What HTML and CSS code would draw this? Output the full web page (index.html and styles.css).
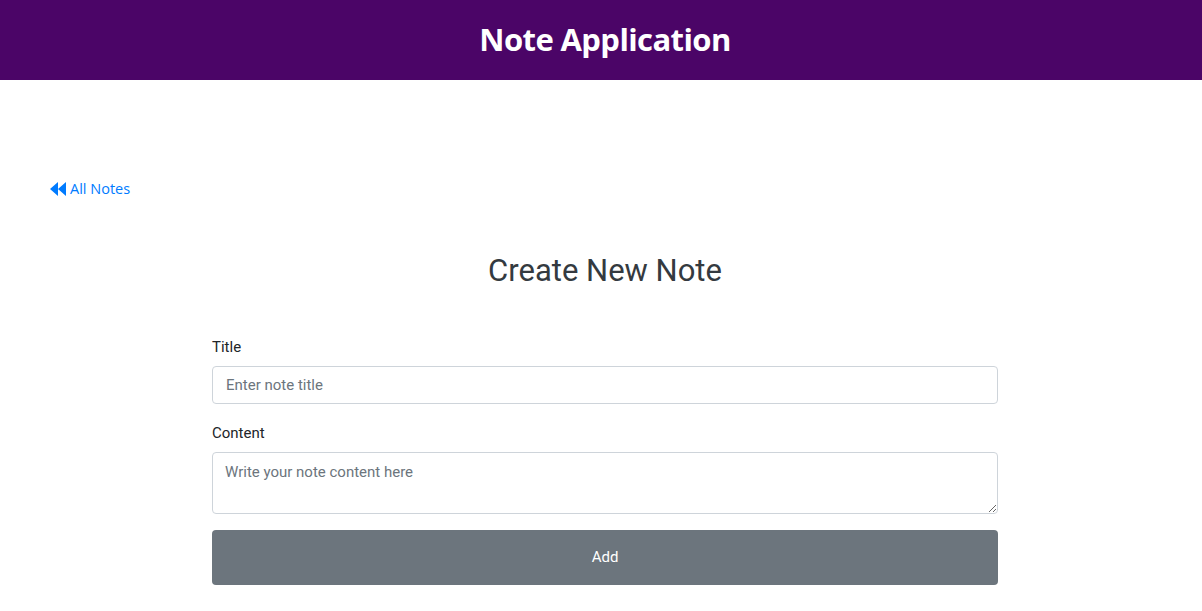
FILE: index.html
```html
<!DOCTYPE html>
<html>
<head>
<meta charset="utf-8">
<link rel="stylesheet" href="styles.css">
</head>
<body>
<header class="topbar"><h1 class="brand">Note Application</h1></header>
<main class="page">
  <a class="back" href="#"><svg class="back-icon" viewBox="0 0 16 14" width="16" height="14"><path d="M8 0 L0 7 L8 14 Z M16 0 L8 7 L16 14 Z" fill="#007bff"/></svg>All Notes</a>
  <h2 class="heading">Create New Note</h2>
  <form class="note-form">
    <label class="label" for="t">Title</label>
    <input class="field" id="t" type="text" placeholder="Enter note title">
    <label class="label" for="c">Content</label>
    <textarea class="field area" id="c" placeholder="Write your note content here"></textarea>
    <button class="btn" type="button">Add</button>
  </form>
</main>
</body>
</html>
```
FILE: styles.css
```css
* { box-sizing: border-box; }
body {
  margin: 0;
  font-family: Roboto, "Liberation Sans", sans-serif;
  color: #212529;
  background: #fff;
}
.topbar {
  background: #4b0567;
  height: 80px;
  padding-left: 8px;
  padding-bottom: 3px;
  display: flex;
  align-items: center;
  justify-content: center;
}
.brand {
  margin: 0;
  color: #fff;
  font-family: "Open Sans", sans-serif;
  font-weight: 700;
  font-size: 31px;
  letter-spacing: -0.6px;
}
.page {
  padding: 99px 42px 0 50px;
}
.back {
  display: inline-flex;
  align-items: center;
  gap: 4px;
  color: #007bff;
  text-decoration: none;
  font-family: "Open Sans", sans-serif;
  font-size: 14.5px;
}
.heading {
  text-align: center;
  font-weight: 400;
  font-size: 31px;
  color: #343a40;
  margin: 52px 0 0 0;
}
.note-form {
  width: 786px;
  margin: 49px auto 0;
  display: flex;
  flex-direction: column;
}
.label {
  font-size: 15px;
  color: #212529;
  margin-bottom: 10px;
}
.field {
  font-family: Roboto, "Liberation Sans", sans-serif;
  font-size: 15px;
  height: 38px;
  border: 1px solid #ced4da;
  border-radius: 4px;
  padding: 0 13px;
  color: #495057;
  margin-bottom: 20px;
}
.field::placeholder { color: #6c757d; }
.area {
  height: 62px;
  padding: 10px 12px;
  margin-bottom: 16px;
  resize: vertical;
}
.btn {
  height: 55px;
  background: #6c757d;
  color: #fff;
  border: 0;
  border-radius: 4px;
  font-family: Roboto, "Liberation Sans", sans-serif;
  font-size: 15px;
}
```
